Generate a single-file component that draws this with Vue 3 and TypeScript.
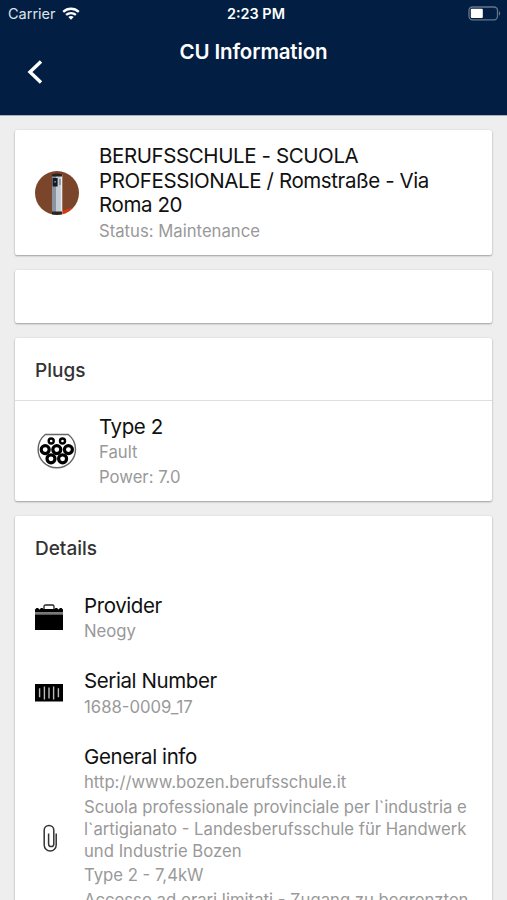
<script setup lang="ts">
interface Plug {
  name: string
  state: string
  power: string
}

interface Detail {
  icon: 'briefcase' | 'barcode' | 'clip'
  title: string
  lines: string[][]
}

const stationName: string[] = ['BERUFSSCHULE - SCUOLA', 'PROFESSIONALE / Romstraße - Via', 'Roma 20']

const plugs: Plug[] = [{ name: 'Type 2', state: 'Fault', power: 'Power: 7.0' }]

const details: Detail[] = [
  { icon: 'briefcase', title: 'Provider', lines: [['Neogy']] },
  { icon: 'barcode', title: 'Serial Number', lines: [['1688-0009_17']] },
  {
    icon: 'clip',
    title: 'General info',
    lines: [
      ['http://www.bozen.berufsschule.it'],
      [
        'Scuola professionale provinciale per l`industria e',
        'l`artigianato - Landesberufsschule für Handwerk',
        'und Industrie Bozen',
      ],
      ['Type 2 - 7,4kW'],
      ['Accesso ad orari limitati - Zugang zu begrenzten'],
    ],
  },
]

const pins: [number, number, number][] = [
  [14.2, 8, 2.5],
  [25.5, 8, 2.5],
  [8.2, 16.6, 4],
  [19.8, 16.6, 4],
  [31.4, 16.6, 4],
  [14, 25.8, 4],
  [25.6, 25.8, 4],
]
</script>

<template>
  <div class="screen">
    <header class="header">
      <div class="status-bar">
        <div class="carrier">
          <span>Carrier</span>
          <svg class="wifi" viewBox="0 0 18 13" fill="none" stroke="#fff" stroke-width="2.3">
            <path d="M1.2 4.9C5.7.7 12.3.7 16.8 4.9" />
            <path d="M4.1 7.9C6.9 5.4 11.1 5.4 13.9 7.9" />
            <path d="M6.3 10L9 12.7L11.7 10C10.2 8.7 7.8 8.7 6.3 10Z" fill="#fff" stroke="none" />
          </svg>
        </div>
        <span class="clock">2:23 PM</span>
        <svg class="battery" viewBox="0 0 33 15">
          <rect x="1" y="1" width="28.5" height="12.8" rx="3.5" fill="none" stroke="#66768b" stroke-width="1.3" />
          <rect x="2.8" y="2.8" width="12" height="9.2" rx="1" fill="#fff" />
          <path d="M31 5.2c1.6.4 1.6 4 0 4.4z" fill="#66768b" />
        </svg>
      </div>
      <div class="toolbar">
        <svg class="back" viewBox="0 0 16 24" fill="none" stroke="#fff" stroke-width="3.4">
          <path d="M14 1.5L3 12L14 22.5" />
        </svg>
        <h1 class="title">CU Information</h1>
      </div>
    </header>

    <main class="content">
      <section class="card station">
        <svg class="avatar" viewBox="0 0 44 44">
          <defs>
            <clipPath id="disc"><circle cx="22" cy="22" r="22" /></clipPath>
          </defs>
          <g clip-path="url(#disc)">
            <rect width="44" height="44" fill="#7b452c" />
            <path d="M27 40l9-3 2 7H27z" fill="#d93a0c" />
            <path d="M17 4.5q5-2.5 10 0V44H17z" fill="#c5cbd2" />
            <path d="M17 5h4v39h-4z" fill="#8795a3" />
            <path d="M25.8 4h1.5v40h-1.5z" fill="#eceef0" />
            <path d="M17 3.5q5-2 10 0v2H17z" fill="#29211e" />
            <rect x="17.6" y="7" width="5" height="8.5" fill="#111a25" />
            <rect x="19.3" y="10" width="1.6" height="1.6" fill="#7b8e9e" />
            <path d="M25 8v6" stroke="#59616a" stroke-width="1" />
            <path d="M17 40.5h10V44H17z" fill="#2b2523" />
          </g>
        </svg>
        <div class="station-text">
          <h2 class="name">
            <span v-for="line in stationName" :key="line" class="line">{{ line }}</span>
          </h2>
          <p class="note">Status: Maintenance</p>
        </div>
      </section>

      <section class="card blank"></section>

      <section class="card plugs">
        <h3 class="card-header ruled">Plugs</h3>
        <div v-for="plug in plugs" :key="plug.name" class="plug">
          <svg class="socket" viewBox="0 0 40 36" fill="none">
            <path d="M8.3 1.5H31.3A19 19 0 0 1 38.5 16.5A18.7 18.3 0 0 1 1.1 16.5A19 19 0 0 1 8.3 1.5Z" stroke="#666" stroke-width="1.4" />
            <circle v-for="(p, i) in pins" :key="i" :cx="p[0]" :cy="p[1]" :r="p[2]" stroke="#000" :stroke-width="p[2] > 3 ? 3.2 : 2.4" />
          </svg>
          <div>
            <h4 class="name">{{ plug.name }}</h4>
            <p class="note">{{ plug.state }}</p>
            <p class="note">{{ plug.power }}</p>
          </div>
        </div>
      </section>

      <section class="card details">
        <h3 class="card-header">Details</h3>
        <div v-for="item in details" :key="item.title" class="detail">
          <div class="icon-slot" :class="item.icon">
            <svg v-if="item.icon === 'briefcase'" class="icon" viewBox="0 0 28 28">
              <path d="M9 5V2.5Q9 1 10.5 1H17.5Q19 1 19 2.5V5" fill="none" stroke="#222" stroke-width="1.3" />
              <path d="M0 8.5V5.5L1.5 4H3L4.5 5.5L6 4H7.5L8.5 5H19.5L20.5 4H22L23.5 5.5L25 4H26.5L28 5.5V8.5Z" />
              <path d="M0 10.3H28V26H0Z" />
              <path d="M0 9.4H28" stroke="#777" stroke-width="1.7" />
            </svg>
            <svg v-else-if="item.icon === 'barcode'" class="icon" viewBox="0 0 28 28">
              <rect y="5" width="28" height="17.5" />
              <path d="M4.6 9.2v9M23.4 9.2v9M9.4 7.4v13M14 8.4v11M18.6 7.4v13" stroke="#bbb" stroke-width="1.4" />
            </svg>
            <svg v-else class="icon" viewBox="0 0 28 28" fill="none" stroke="#333" stroke-width="1.5">
              <path d="M21.2 9.5V21A6 6 0 0 1 9.2 21V6.2A4.8 4.8 0 0 1 18.8 6.2V20A2.6 2.6 0 0 1 13.6 20V9.5" />
            </svg>
          </div>
          <div class="detail-text">
            <h4 class="name">{{ item.title }}</h4>
            <p v-for="(para, i) in item.lines" :key="i" class="note">
              <span v-for="line in para" :key="line" class="line">{{ line }}</span>
            </p>
          </div>
        </div>
      </section>
    </main>
  </div>
</template>

<style>
body {
  background: #eeeeef;
}
</style>

<style scoped>
.screen {
  height: 900px;
  overflow: hidden;
  display: flex;
  flex-direction: column;
  background: #eeeeef;
  font-family: Inter, "Liberation Sans", sans-serif;
}

h1, h2, h3, h4, p {
  margin: 0;
  font-weight: 400;
}

.header {
  flex: none;
  box-sizing: border-box;
  height: 115px;
  background: #021e42;
  color: #fff;
  box-shadow: 0 1px 0 #a9b0ba;
}

.status-bar {
  display: grid;
  grid-template-columns: 1fr auto 1fr;
  align-items: center;
  height: 27px;
  padding: 0 6px 0 8px;
}

.carrier {
  display: flex;
  align-items: center;
  gap: 6px;
  font-size: 14.5px;
  color: #dfe3ea;
}

.wifi {
  width: 18px;
  height: 13px;
}

.clock {
  padding-left: 3px;
  font-size: 14.4px;
  font-weight: 600;
}

.battery {
  justify-self: end;
  width: 33px;
  height: 15px;
}

.toolbar {
  display: grid;
  grid-template-columns: 72px 1fr 72px;
  align-items: start;
}

.back {
  width: 16px;
  height: 24px;
  margin: 33px 0 0 27px;
}

.title {
  margin-top: 12px;
  text-align: center;
  font-size: 20.5px;
  letter-spacing: -0.12px;
  line-height: 26px;
  font-weight: 600;
}

.content {
  display: flex;
  flex-direction: column;
  gap: 15px;
  padding: 15px 15px 0;
}

.card {
  flex: none;
  box-sizing: border-box;
  background: #fff;
  border-radius: 2px;
  box-shadow: 0 1px 2px rgba(0, 0, 0, 0.32), 0 0 2px rgba(0, 0, 0, 0.08);
}

.station {
  display: flex;
  align-items: center;
  height: 125px;
  padding-left: 20px;
  gap: 20px;
}

.avatar {
  width: 44px;
  height: 44px;
}

.line {
  display: block;
  white-space: nowrap;
}

.name {
  padding-top: 1px;
  font-size: 20.5px;
  letter-spacing: -0.4px;
  line-height: 24.4px;
  color: #111;
}

.note {
  margin-top: 2.5px;
  font-size: 16.7px;
  letter-spacing: 0;
  line-height: 22px;
  color: #999;
}

.name + .note {
  margin-top: 2px;
}

.blank {
  height: 53px;
}

.plugs {
  height: 163px;
}

.card-header {
  box-sizing: border-box;
  height: 63px;
  padding: 2px 0 0 20px;
  font-size: 19px;
  line-height: 61px;
  font-weight: 500;
  color: #333;
}

.ruled {
  border-bottom: 1px solid #dedede;
}

.plug {
  display: flex;
  align-items: center;
  height: 100px;
  padding-left: 22px;
  gap: 22px;
}

.socket {
  width: 40px;
  height: 36px;
}

.details {
  height: 500px;
}

.detail {
  display: flex;
  padding: 14px 0 12px 20px;
  gap: 21px;
}

.icon-slot {
  display: flex;
  align-items: center;
}

.icon-slot.clip {
  padding-top: 21px;
}

.icon {
  width: 28px;
  height: 28px;
}
</style>
